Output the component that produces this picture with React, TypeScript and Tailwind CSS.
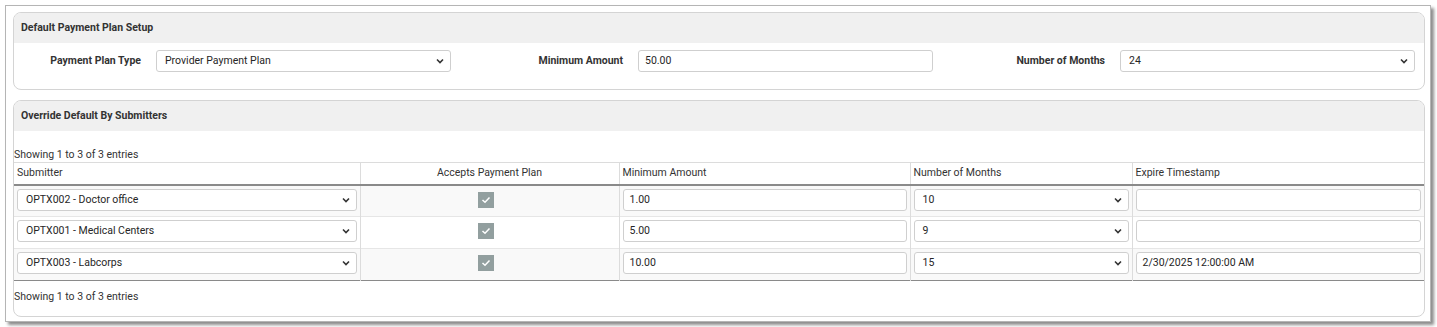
const font = { fontFamily: 'Roboto, "Liberation Sans", Arial, sans-serif' }

function Chevron() {
  return (
    <svg width="8" height="6" viewBox="0 0 8 6" className="shrink-0">
      <path d="M1 1.5 L4 4.5 L7 1.5" fill="none" stroke="#333" strokeWidth="1.6" />
    </svg>
  )
}

function Select({ value, className = '' }: { value: string; className?: string }) {
  return (
    <div
      className={`h-[22px] flex items-center justify-between border border-[#cfcfcf] rounded-[3px] bg-white pl-[8px] pr-[6px] text-[10.5px] text-[#262626] ${className}`}
    >
      <span>{value}</span>
      <Chevron />
    </div>
  )
}

function Input({ value, className = '' }: { value: string; className?: string }) {
  return (
    <div
      className={`h-[22px] flex items-center border border-[#cfcfcf] rounded-[3px] bg-white pl-[6px] text-[10.5px] text-[#262626] ${className}`}
    >
      {value}
    </div>
  )
}

function Check() {
  return (
    <div className="w-[16px] h-[16px] bg-[#929f9f] flex items-center justify-center">
      <svg width="10" height="8" viewBox="0 0 10 8">
        <path d="M1.5 4 L4 6.3 L8.5 1.5" fill="none" stroke="#fff" strokeWidth="1.5" />
      </svg>
    </div>
  )
}

const rows = [
  { sub: 'OPTX002 - Doctor office', min: '1.00', months: '10', exp: '' },
  { sub: 'OPTX001 - Medical Centers', min: '5.00', months: '9', exp: '' },
  { sub: 'OPTX003 - Labcorps', min: '10.00', months: '15', exp: '2/30/2025 12:00:00 AM' },
]

export default function App() {
  return (
    <div className="w-[1437px] h-[327px] bg-white pt-[5px] pl-[5px]" style={font}>
      <div className="w-[1426px] h-[317px] border border-[#b5b5b5] bg-white shadow-[3px_3px_3px_rgba(0,0,0,0.45)] pt-[6px] px-[7px]">
        {/* default setup */}
        <div className="w-[1412px] border border-[#d4d4d4] rounded-[8px] overflow-hidden">
          <div className="h-[30px] bg-[#f0f0f0] flex items-center pl-[7px] text-[10.5px] font-bold text-[#333]">
            Default Payment Plan Setup
          </div>
          <div className="h-[46px] flex items-start pt-[7px] text-[10.5px] font-bold text-[#333]">
            <div className="w-[127px] h-[22px] flex items-center justify-end">Payment Plan Type</div>
            <Select value="Provider Payment Plan" className="ml-[15px] w-[295px] font-normal" />
            <div className="w-[172px] h-[22px] flex items-center justify-end">Minimum Amount</div>
            <Input value="50.00" className="ml-[15px] w-[295px] font-normal" />
            <div className="w-[172px] h-[22px] flex items-center justify-end">Number of Months</div>
            <Select value="24" className="ml-[15px] w-[295px] font-normal" />
          </div>
        </div>

        {/* override */}
        <div className="w-[1412px] mt-[10px] border border-[#d4d4d4] rounded-[8px] overflow-hidden">
          <div className="h-[30px] bg-[#f0f0f0] flex items-center pl-[7px] text-[10.5px] font-bold text-[#333]">
            Override Default By Submitters
          </div>
          <div className="pt-[16px] text-[10.5px] text-[#333] leading-[15px]">Showing 1 to 3 of 3 entries</div>
          <table className="w-full border-collapse text-[10.5px] text-[#333]">
            <thead>
              <tr className="h-[22px] border-t border-[#dcdcdc] border-b-2 border-b-[#8a8a8a]">
                <th className="w-[346px] text-left font-normal pl-[3px] border-r border-[#dcdcdc]">Submitter</th>
                <th className="w-[259px] text-center font-normal border-r border-[#dcdcdc]">Accepts Payment Plan</th>
                <th className="w-[291px] text-left font-normal pl-[3px] border-r border-[#dcdcdc]">Minimum Amount</th>
                <th className="w-[222px] text-left font-normal pl-[3px] border-r border-[#dcdcdc]">Number of Months</th>
                <th className="text-left font-normal pl-[3px]">Expire Timestamp</th>
              </tr>
            </thead>
            <tbody>
              {rows.map((r, i) => (
                <tr
                  key={r.sub}
                  className={`h-[32px] ${i % 2 === 0 ? 'bg-[#f9f9f9]' : 'bg-white'} ${
                    i === rows.length - 1 ? 'border-b border-[#8a8a8a]' : 'border-b border-[#e6e6e6]'
                  }`}
                >
                  <td className="px-[3px] pt-[3px] pb-[5px] align-top border-r border-[#dcdcdc]">
                    <Select value={r.sub} />
                  </td>
                  <td className="pt-[6px] align-top border-r border-[#dcdcdc]">
                    <div className="flex justify-center pr-[7px]">
                      <Check />
                    </div>
                  </td>
                  <td className="px-[3px] pt-[3px] pb-[5px] align-top border-r border-[#dcdcdc]">
                    <Input value={r.min} />
                  </td>
                  <td className="px-[3px] pt-[3px] pb-[5px] align-top border-r border-[#dcdcdc]">
                    <Select value={r.months} />
                  </td>
                  <td className="px-[3px] pt-[3px] pb-[5px] align-top">
                    <Input value={r.exp} />
                  </td>
                </tr>
              ))}
            </tbody>
          </table>
          <div className="h-[35px] pt-[8px] text-[10.5px] text-[#333] leading-[15px]">Showing 1 to 3 of 3 entries</div>
        </div>
      </div>
    </div>
  )
}
